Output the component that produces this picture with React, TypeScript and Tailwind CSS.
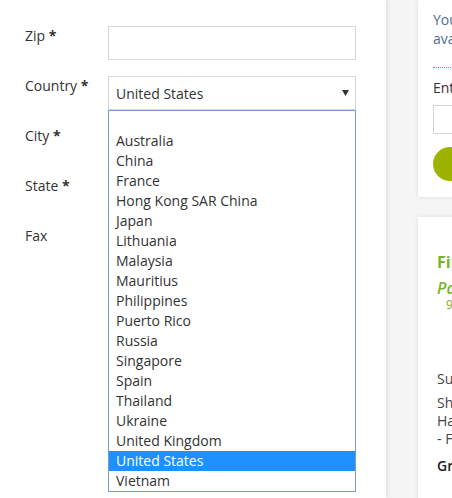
import React from 'react';

const countries = [
  '',
  'Australia',
  'China',
  'France',
  'Hong Kong SAR China',
  'Japan',
  'Lithuania',
  'Malaysia',
  'Mauritius',
  'Philippines',
  'Puerto Rico',
  'Russia',
  'Singapore',
  'Spain',
  'Thailand',
  'Ukraine',
  'United Kingdom',
  'United States',
  'Vietnam',
];

function Label({ text, required }: { text: string; required?: boolean }) {
  return (
    <div className="w-[83px] shrink-0 text-[14px] leading-[20px] text-[#333]">
      {text}
      {required && <span className="font-bold"> *</span>}
    </div>
  );
}

function FieldRow({ label, required, children }: { label: string; required?: boolean; children?: React.ReactNode }) {
  return (
    <div className="flex items-start">
      <Label text={label} required={required} />
      {children ?? <div className="h-[34px] w-[248px] border border-[#d6d6d6] bg-white" />}
    </div>
  );
}

export default function App() {
  return (
    <div className="flex h-[498px] w-[452px] overflow-hidden bg-[#f5f5f5] font-['Open_Sans',sans-serif]">
      {/* address form */}
      <div className="relative z-10 w-[386px] shrink-0 bg-white pl-[25px] pt-[26px] shadow-[2px_0_5px_rgba(0,0,0,0.08)]">
        <div className="flex flex-col gap-[16px]">
          <FieldRow label="Zip" required />
          <FieldRow label="Country" required>
            <div className="flex h-[34px] w-[248px] items-center justify-between border border-[#d6d6d6] bg-white pl-[7px] pr-[6px] text-[14px] text-[#333]">
              <span>United States</span>
              <svg width="7" height="6" viewBox="0 0 7 6">
                <path d="M0 0h7L3.5 6z" fill="#333" />
              </svg>
            </div>
          </FieldRow>
          <FieldRow label="City" required />
          <FieldRow label="State" required />
          <FieldRow label="Fax" />
        </div>

        {/* open country list */}
        <div className="absolute left-[108px] top-[110px] w-[248px] border border-[#7b9bd1] bg-white">
          {countries.map((c, i) => (
            <div
              key={i}
              className={
                c === 'United States'
                  ? 'h-[20px] bg-[#1e90ff] pl-[7px] text-[14px] leading-[19px] text-white'
                  : 'h-[20px] pl-[7px] text-[14px] leading-[19px] text-[#333]'
              }
            >
              {c}
            </div>
          ))}
        </div>
      </div>

      {/* sidebar */}
      <div className="ml-[32px] flex w-[300px] shrink-0 flex-col gap-[20px]">
        <div className="h-[197px] shrink-0 bg-white px-[15px] pt-[10px] shadow-[0_0_4px_rgba(0,0,0,0.1)]">
          <p className="text-[14px] leading-[19px] text-[#4e6e8e]">
            Your store credit balance is
            <br />
            available for this order.
          </p>
          <div className="mt-[19px] border-t border-dotted border-[#e07b39]" />
          <p className="mt-[10px] text-[14px] leading-[20px] text-[#333]">Enter a coupon code</p>
          <div className="mt-[7px] h-[29px] w-[250px] border border-[#d6d6d6]" />
          <button className="mt-[13px] flex h-[34px] w-[200px] items-center justify-center rounded-full bg-[#9cb400] text-[14px] font-semibold text-white">
            Apply
          </button>
        </div>

        <div className="h-[300px] shrink-0 bg-white pl-[19px] pt-[35px] shadow-[0_0_4px_rgba(0,0,0,0.1)]">
          <p className="text-[16px] font-bold leading-[20px] text-[#78b52b]">First order gift</p>
          <p className="mt-[6px] text-[16px] font-semibold italic leading-[20px] text-[#78b52b]">Pay less today</p>
          <p className="pl-[9px] text-[12px] leading-[14px] text-[#8aa52b]">9 items qualify</p>
          <p className="mt-[57px] text-[14px] leading-[20px] text-[#444]">Subtotal</p>
          <p className="mt-[5px] text-[14px] leading-[18px] text-[#444]">
            Shipping &amp;
            <br />
            Handling
            <br />- Flat rate
          </p>
          <p className="mt-[8px] text-[14px] font-semibold leading-[20px] text-[#222]">Grand Total</p>
        </div>
      </div>
    </div>
  );
}
